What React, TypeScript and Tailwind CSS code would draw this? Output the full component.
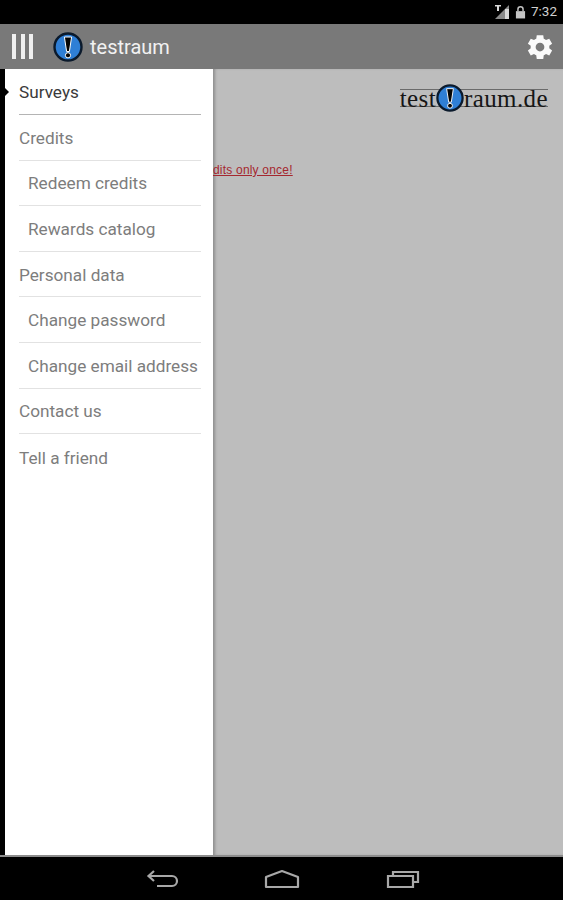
import { type FC } from "react";

const menu = [
  { label: "Credits", sub: false },
  { label: "Redeem credits", sub: true },
  { label: "Rewards catalog", sub: true },
  { label: "Personal data", sub: false },
  { label: "Change password", sub: true },
  { label: "Change email address", sub: true },
  { label: "Contact us", sub: false },
  { label: "Tell a friend", sub: false },
];

const Badge: FC<{ size: number }> = ({ size }) => (
  <svg width={size} height={size} viewBox="0 0 30 30" className="shrink-0">
    <circle cx="15" cy="15" r="13.5" fill="#2f7fd6" stroke="#0b1a2c" strokeWidth="2.400" />
    <path d="M11.400 5h7.200l-2.200 14.500h-2.800z" fill="#050505" stroke="#fff" strokeWidth="1" />
    <circle cx="15" cy="23.300" r="2.600" fill="#050505" stroke="#fff" strokeWidth="1" />
  </svg>
);

const App: FC = () => {
  return (
    <div className="flex flex-col h-[900px] w-[563px] overflow-hidden bg-black font-['Roboto',sans-serif]">
      {/* status bar */}
      <div className="flex h-6 shrink-0 items-center justify-end gap-[5px] pr-[6px]">
        <svg width="16" height="16" viewBox="0 0 16 16">
          <path d="M15 1v14H1z" fill="#8a8a8a" />
          <path d="M11 15V5h4v10z" fill="#d8d8d8" />
          <path d="M1 1h6v1.500H5V7H3V2.500H1z" fill="#d8d8d8" />
        </svg>
        <svg width="11" height="15" viewBox="0 0 12 15">
          <path d="M1 6h10v8H1z" fill="#c4c4c4" />
          <path d="M3.200 6V4a2.800 2.800 0 0 1 5.600 0v2" fill="none" stroke="#c4c4c4" strokeWidth="1.600" />
        </svg>
        <span className="text-[13.500px] leading-none text-[#d0d0d0]">7:32</span>
      </div>

      {/* action bar */}
      <div className="flex h-[45px] shrink-0 items-center bg-[#797979] pl-3 pr-[8px]">
        <div className="flex gap-[4.500px]">
          <div className="h-[25px] w-1 bg-[#f0f0f0]" />
          <div className="h-[25px] w-1 bg-[#f0f0f0]" />
          <div className="h-[25px] w-1 bg-[#f0f0f0]" />
        </div>
        <div className="ml-[20px]">
          <Badge size={30} />
        </div>
        <span className="ml-[7px] text-[20px] leading-none text-[#f2f2f2]">testraum</span>
        <svg width="30" height="30" viewBox="0 0 24 24" className="ml-auto">
          <path
            fill="#fafafa"
            d="M19.400 13a7.600 7.600 0 0 0 0-2l2.300-1.700-2.300-4-2.600 1.100a7.600 7.600 0 0 0-1.800-1L14.600 2.500H9.400L9 5.400a7.600 7.600 0 0 0-1.800 1L4.600 5.300l-2.300 4L4.600 11a7.600 7.600 0 0 0 0 2l-2.300 1.700 2.300 4 2.600-1.100a7.600 7.600 0 0 0 1.800 1l.4 2.900h5.200l.4-2.900a7.600 7.600 0 0 0 1.800-1l2.600 1.100 2.300-4zM12 15.500a3.500 3.500 0 1 1 0-7 3.500 3.500 0 0 1 0 7z"
          />
        </svg>
      </div>

      {/* content */}
      <div className="flex min-h-0 flex-1 border-b-2 border-[#8c8c8c]">
        <div className="w-[5px] shrink-0 bg-black" />

        {/* drawer */}
        <div className="relative w-[208px] shrink-0 bg-white pl-[14px] pr-3">
          <div className="absolute -left-px top-[18px] h-0 w-0 border-y-[5px] border-l-[5px] border-y-transparent border-l-black" />
          <div className="flex h-[46px] items-center border-b border-[#b4b4b4] pt-[3px] text-[17.200px] text-[#3a3a3a]">
            Surveys
          </div>
          {menu.map((item, i) => (
            <div
              key={item.label}
              className={`flex h-[45.600px] items-center pt-[3px] text-[17.200px] text-[#7d7d7d] whitespace-nowrap ${
                item.sub ? "pl-[9px]" : ""
              } ${i < menu.length - 1 ? "border-b border-[#e2e2e2]" : ""}`}
            >
              {item.label}
            </div>
          ))}
        </div>

        {/* page behind the drawer */}
        <div className="flex min-w-0 flex-1 flex-col bg-[#bdbdbd] [box-shadow:inset_3px_0_3px_-1px_#8f8f8f]">
          <div className="flex justify-end pr-[15px] pt-[20px]">
            <div className="flex h-[18px] items-center border-y border-[#6b6b6b] font-['Liberation_Serif',serif] text-[25px] leading-none tracking-[0.4px] text-[#161616]">
              <span>test</span>
              <Badge size={28} />
              <span>raum.de</span>
            </div>
          </div>
          <div className="mt-[55px] whitespace-nowrap font-['Liberation_Sans',sans-serif] text-[12px] leading-[16px] tracking-[0.2px] text-[#a5272f] underline">
            dits only once!
          </div>
        </div>
      </div>

      {/* nav bar */}
      <div className="flex h-[43px] shrink-0 items-center pl-[146px]">
        <svg width="34" height="22" viewBox="0 0 34 22" fill="none" stroke="#a8a8a8" strokeWidth="2.200">
          <path d="M8 3 2.500 8 8 13" />
          <path d="M3 8h23a4.500 4.500 0 0 1 0 10H11" />
        </svg>
        <svg width="36" height="20" viewBox="0 0 36 20" className="ml-[84px]" fill="none" stroke="#a8a8a8" strokeWidth="2.200">
          <path d="M2 8 18 2l16 6v10H2z" strokeLinejoin="round" />
        </svg>
        <svg width="34" height="20" viewBox="0 0 34 20" className="ml-[86px]" fill="none" stroke="#a8a8a8" strokeWidth="2.200">
          <path d="M2 7h25v11H2z" />
          <path d="M7 6V3h25v10h-4" />
        </svg>
      </div>
    </div>
  );
};

export default App;
